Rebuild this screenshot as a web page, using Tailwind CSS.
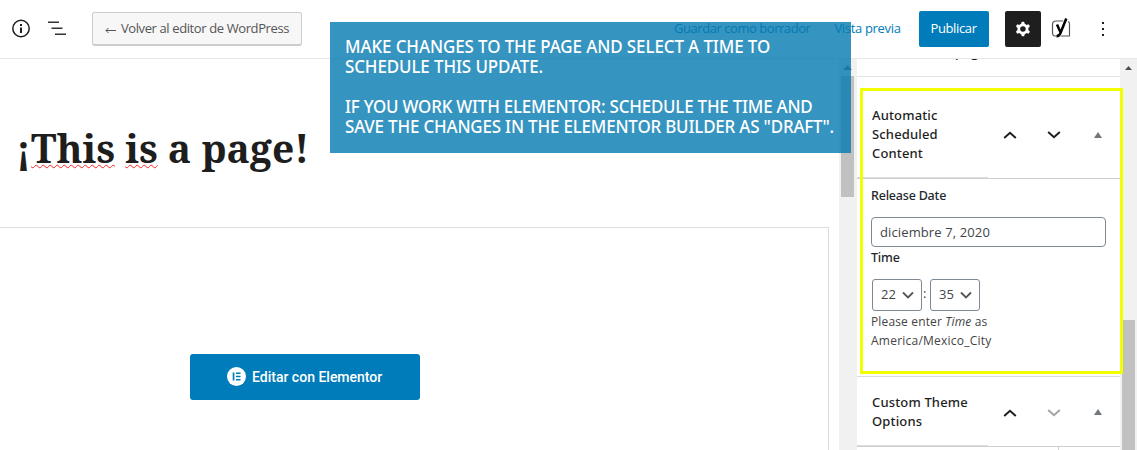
<!DOCTYPE html>
<html lang="es">
<head>
<meta charset="utf-8">
<title>Editor</title>
<script src="https://cdn.jsdelivr.net/npm/@tailwindcss/browser@4"></script>
</head>
<body class="relative h-[450px] w-[1137px] overflow-hidden bg-white font-['Open_Sans','Noto_Sans',sans-serif] text-[13px] text-[#1e1e1e] whitespace-nowrap">
<div class="flex h-full flex-col overflow-hidden">
  <header class="flex h-[59px] shrink-0 items-center border-b border-[#e8e8e8] pl-[11px] pb-px">
    <svg class="size-5" viewBox="0 0 20 20" fill="none"><circle cx="10" cy="9.500" r="8.200" stroke="#1e1e1e" stroke-width="1.500"/><path d="M9 5h2v2H9zM9 8.500h2v5.500H9z" fill="#1e1e1e"/></svg>
    <svg class="ml-4 h-5 w-5" viewBox="0 0 20 20" fill="none" stroke="#333" stroke-width="1.600"><path d="M1 3.200h11M4.500 9.200h11M8 15.200h11"/></svg>
    <div class="ml-[25px] flex h-[34px] w-[210px] shrink-0 items-center justify-center rounded-[3px] border border-b-2 border-[#ccc] bg-[#f7f7f7] pt-[2px] text-[#555] tracking-[-0.39px]"><svg class="mr-[5px] mt-px h-2 w-[11px]" viewBox="0 0 11 8" fill="none" stroke="#555"><path d="M1 4.500h10M3.500 2 1 4.500 3.500 7"/></svg>Volver al editor de WordPress</div>
    <div class="ml-[372px] pt-px tracking-[-0.45px] text-[#007cba]">Guardar como borrador</div>
    <div class="ml-6 pt-px tracking-[-0.32px] text-[#007cba]">Vista previa</div>
    <div class="ml-[18px] flex h-9 w-[70px] items-center justify-center rounded-[2px] bg-[#007cba] pt-px tracking-[-0.36px] text-white">Publicar</div>
    <div class="ml-4 flex h-9 w-9 items-center justify-center rounded-[2px] bg-[#1e1e1e]">
      <svg class="size-[22px]" viewBox="0 0 24 24" fill="#fff"><path fill-rule="evenodd" d="M10.289 4.836A1 1 0 0111.275 4h1.306a1 1 0 01.987.836l.244 1.466c.787.260 1.503.679 2.108 1.218l1.393-.522a1 1 0 011.216.437l.653 1.130a1 1 0 01-.230 1.273l-1.148.944a6.025 6.025 0 010 2.435l1.149.946a1 1 0 01.230 1.272l-.653 1.130a1 1 0 01-1.216.437l-1.394-.522c-.605.540-1.320.958-2.108 1.218l-.244 1.466a1 1 0 01-.987.836h-1.306a1 1 0 01-.986-.836l-.244-1.466a5.995 5.995 0 01-2.108-1.218l-1.394.522a1 1 0 01-1.217-.436l-.653-1.131a1 1 0 01.230-1.272l1.149-.946a6.026 6.026 0 010-2.435l-1.148-.944a1 1 0 01-.230-1.272l.653-1.131a1 1 0 011.217-.437l1.393.522a5.994 5.994 0 012.108-1.218l.244-1.466zM14.929 12a3 3 0 11-6 0 3 3 0 016 0z"/></svg>
    </div>
    <svg class="ml-[10px] -mt-px h-[22px] w-5" viewBox="0 0 20 22" fill="none"><path d="M13 4H5Q1.500 4 1.500 7.500v8Q1.500 19 4 19h14.500V7Q18.500 5 17 4.500" stroke="#555" stroke-width="1.200"/><path d="m6 7.500 3.700 8.200M15.300 1.500 9.800 15.300Q8.500 19 5.500 19.300" stroke="#fff" stroke-width="4"/><path d="m6 7.500 3.700 8.200M15.300 1.500 9.800 15.300Q8.500 19 5.500 19.300" stroke="#000" stroke-width="2.500"/></svg>
    <svg class="ml-[30px] h-4 w-1" viewBox="0 0 4 16" fill="#1e1e1e"><path d="M1 1h2v2H1zM1 7h2v2H1zM1 13h2v2H1z"/></svg>
  </header>
  <div class="flex min-h-0 flex-1 overflow-hidden">
    <main class="flex w-[839px] flex-col">
      <h1 class="mt-[60px] ml-[16px] h-[60px] font-['Noto_Serif',serif] text-[39px] leading-[58px] font-bold tracking-[0.02px]">¡<span class="underline decoration-[#f22] decoration-wavy decoration-[0.8px] underline-offset-[1px] [text-decoration-skip-ink:none]">This</span> <span class="underline decoration-[#f22] decoration-wavy decoration-[0.8px] underline-offset-[1px] [text-decoration-skip-ink:none]">is</span> a page!</h1>
      <div class="mt-12 min-h-0 w-[829px] flex-1 border-t border-r border-[#ddd] pt-[126px] pl-[190px]">
        <div class="flex h-[46px] w-[230px] items-center rounded-[3px] bg-[#007cba] pl-[37px] font-[Roboto,sans-serif] text-sm font-medium text-white"><svg class="mr-[6px] -mt-[2px] size-[19px]" viewBox="0 0 19 19"><circle cx="9.500" cy="9.500" r="9.500" fill="#fff"/><path d="M5.700 5.500h1.700v8H5.700zM9 5.500h4.500v1.600H9zM9 8.700h4.500v1.600H9zM9 11.900h4.500v1.600H9z" fill="#007cba"/></svg>Editar con Elementor</div>
      </div>
    </main>
    <div class="flex w-[18px] flex-col items-center bg-[#f1f1f1] pr-[2px]">
      <svg class="mt-[6px] h-[5px] w-[9px]" viewBox="0 0 9 5" fill="#777"><path d="M4.500 0 9 5H0z"/></svg>
      <div class="mt-[6px] h-[121px] w-[13px] bg-[#c1c1c1]"></div>
    </div>
    <aside class="flex w-[263px] flex-col overflow-hidden">
      <div class="flow-root h-[18px] shrink-0 overflow-hidden border-b border-[#e2e4e7]"><div class="-mt-[15px] pl-[15px] leading-[17px] font-semibold tracking-[0.15px]">Atributos de página</div></div>
      <section class="flex h-[102px] shrink-0 items-center border-b border-[#ccd0d4] pr-[15px]">
        <h2 class="flex h-[101px] w-[131px] flex-col justify-center self-start border-b border-[#dcdcde] pt-[15px] pl-[15px] font-['Noto_Sans',sans-serif] font-medium tracking-[0.15px] leading-[19px]"><span>Automatic</span><span>Scheduled</span><span>Content</span></h2>
        <svg class="mt-[15px] ml-[14px] h-3 w-[16px]" viewBox="0 0 16 12" fill="none" stroke="#1e1e1e" stroke-width="2"><path d="m2.200 9 5.800-5.200L13.800 9"/></svg>
        <svg class="mt-[15px] ml-7 h-3 w-[16px]" viewBox="0 0 16 12" fill="none" stroke="#1e1e1e" stroke-width="2"><path d="m2.200 3 5.800 5.200L13.800 3"/></svg>
        <svg class="mt-[14px] ml-8 h-[6px] w-2" viewBox="0 0 8 6" fill="#72777c"><path d="M4 0 8 6H0z"/></svg>
      </section>
      <section class="h-[198px] shrink-0 border-b border-[#dcdcde] pl-[14px] text-[#444]">
        <div class="pt-[7px] font-['Noto_Sans',sans-serif] text-[12.5px] leading-[19px] font-medium tracking-[-0.2px] text-[#23282d]">Release Date</div>
        <div class="mt-3 flex h-[30px] w-[235px] items-center rounded-[4px] border border-[#7e8993] pt-px pl-2 tracking-[0.12px] text-[#40464b]">diciembre 7, 2020</div>
        <div class="mt-px font-['Noto_Sans',sans-serif] text-[12.5px] leading-[19px] font-medium tracking-[-0.2px] text-[#23282d]">Time</div>
        <div class="mt-3 ml-px flex h-8 text-[#40464b]">
          <div class="flex w-[50px] items-center rounded-[3px] border border-[#7e8993] pl-2">22<svg class="ml-[6px] h-[9px] w-3" viewBox="0 0 12 9" fill="none" stroke="#555" stroke-width="1.800"><path d="m1 1.500 5 5 5-5"/></svg></div>
          <div class="w-2 pl-px pt-[5px] leading-[19px]">:</div>
          <div class="flex w-[50px] items-center rounded-[3px] border border-[#7e8993] pl-2">35<svg class="ml-[6px] h-[9px] w-3" viewBox="0 0 12 9" fill="none" stroke="#555" stroke-width="1.800"><path d="m1 1.500 5 5 5-5"/></svg></div>
        </div>
        <div class="mt-px text-xs leading-[19px] tracking-[0.15px]">Please enter <em>Time</em> as<br><span class="tracking-[0.23px]">America/Mexico_City</span></div>
      </section>
      <section class="flex h-[70px] shrink-0 items-center border-b border-[#ccd0d4] pr-[15px]">
        <h2 class="flex h-[69px] w-[131px] flex-col justify-center self-start border-b border-[#dcdcde] pt-[2px] pl-[15px] font-['Noto_Sans',sans-serif] font-medium tracking-[0.15px] leading-[19px]"><span>Custom Theme</span><span>Options</span></h2>
        <svg class="mt-[2px] ml-[14px] h-3 w-[16px]" viewBox="0 0 16 12" fill="none" stroke="#1e1e1e" stroke-width="2"><path d="m2.200 9 5.800-5.200L13.800 9"/></svg>
        <svg class="mt-[2px] ml-7 h-3 w-[16px]" viewBox="0 0 16 12" fill="none" stroke="#a0a5aa" stroke-width="2"><path d="m2.200 3 5.800 5.200L13.800 3"/></svg>
        <svg class="mt-px ml-8 h-[6px] w-2" viewBox="0 0 8 6" fill="#72777c"><path d="M4 0 8 6H0z"/></svg>
      </section>
      <div class="w-[202px] flex-1 border-r border-[#ccd0d4]"></div>
    </aside>
    <div class="flex w-[17px] flex-col items-center bg-[#f1f1f1]">
      <svg class="mt-[7px] h-1 w-[7px]" viewBox="0 0 7 4" fill="#505050"><path d="M3.500 0 7 4H0z"/></svg>
      <div class="mt-[250px] w-[13px] flex-1 bg-[#c1c1c1]"></div>
    </div>
  </div>
</div>
<div class="absolute top-[88px] left-[860px] h-[286px] w-[263px] border-3 border-[#f2ff00]"></div>
<div class="absolute top-[22px] left-[330px] h-[131px] w-[521px] bg-[#0479b0]/80"></div>
<div class="absolute top-[36px] left-[345px] origin-left scale-x-[0.94] font-['Noto_Sans',sans-serif] text-[18px] leading-5 font-medium text-white">
  <p class="tracking-[-0.09px]">MAKE CHANGES TO THE PAGE AND SELECT A TIME TO</p>
  <p class="tracking-[-0.1px]">SCHEDULE THIS UPDATE.</p>
  <p class="mt-5 tracking-[-0.22px]">IF YOU WORK WITH ELEMENTOR: SCHEDULE THE TIME AND</p>
  <p class="tracking-[-0.18px]">SAVE THE CHANGES IN THE ELEMENTOR BUILDER AS "DRAFT".</p>
</div>
</body>
</html>
